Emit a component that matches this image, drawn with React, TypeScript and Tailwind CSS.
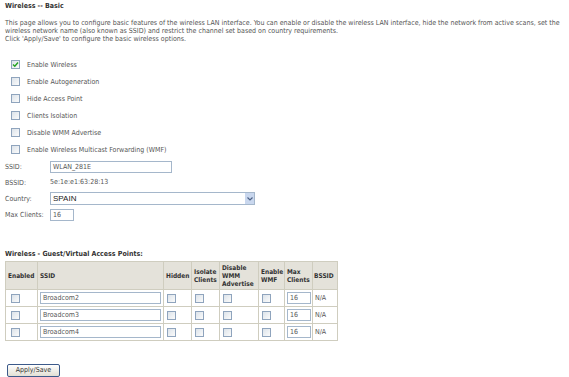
const font = { fontFamily: '"DejaVu Sans Condensed", "DejaVu Sans", sans-serif' };

function Box({ checked = false }: { checked?: boolean }) {
  return (
    <span className="inline-flex h-[9px] w-[9px] items-center justify-center border border-[#8fa4bd] bg-gradient-to-br from-[#dce3ea] to-[#fbfbfb]">
      {checked && (
        <svg width="7" height="7" viewBox="0 0 7 7">
          <path d="M1 3.5 L2.8 5.3 L6 1.5" stroke="#21a121" strokeWidth="1.4" fill="none" />
        </svg>
      )}
    </span>
  );
}

const options = [
  { label: "Enable Wireless", checked: true },
  { label: "Enable Autogeneration" },
  { label: "Hide Access Point" },
  { label: "Clients Isolation" },
  { label: "Disable WMM Advertise" },
  { label: "Enable Wireless Multicast Forwarding (WMF)" },
];

const guests = ["Broadcom2", "Broadcom3", "Broadcom4"];

export default function App() {
  return (
    <div className="min-h-screen bg-white text-[7px] leading-[8px] text-[#555]" style={font}>
      <div className="px-[5px] pt-[2px]">
        <div className="font-bold text-[#333] h-[9px]">Wireless -- Basic</div>
        <p className="mt-[8px] whitespace-nowrap text-[#555]">
          This page allows you to configure basic features of the wireless LAN interface. You can enable or disable the wireless LAN interface, hide the network from active scans, set the
          <br />
          wireless network name (also known as SSID) and restrict the channel set based on country requirements.
          <br />
          Click 'Apply/Save' to configure the basic wireless options.
        </p>

        <div className="mt-[17px] flex flex-col gap-[8px] pl-[6px]">
          {options.map((o) => (
            <div key={o.label} className="flex h-[9px] items-center gap-[7px]">
              <Box checked={o.checked} />
              <span>{o.label}</span>
            </div>
          ))}
        </div>

        <div className="mt-[7px] grid grid-cols-[45px_auto] items-center gap-y-[4px]">
          <span>SSID:</span>
          <span className="flex h-[12px] w-[122px] items-center border border-[#a5b7cb] px-[2px]">WLAN_281E</span>
          <span>BSSID:</span>
          <span className="h-[11px] leading-[11px]">5e:1e:e1:63:28:13</span>
          <span>Country:</span>
          <span className="flex h-[13px] w-[205px] items-center justify-between border border-[#a5b7cb] pl-[2px] text-[8px] text-[#222]" style={{ fontFamily: '"Liberation Sans", sans-serif' }}>
            SPAIN
            <span className="flex h-[11px] w-[9px] items-center justify-center bg-[#c9d7ee]">
              <svg width="6" height="4" viewBox="0 0 6 4">
                <path d="M0.5 0.5 L3 3 L5.5 0.5" stroke="#4d6185" strokeWidth="1.2" fill="none" />
              </svg>
            </span>
          </span>
          <span>Max Clients:</span>
          <span className="flex h-[12px] w-[24px] items-center border border-[#a5b7cb] px-[2px]">16</span>
        </div>

        <div className="mt-[29px] font-bold text-[#333]">Wireless - Guest/Virtual Access Points:</div>

        <table className="mt-[3px] w-[332px] table-fixed border-collapse border border-[#cfcdbf]">
          <colgroup>
            <col className="w-[32px]" />
            <col className="w-[126px]" />
            <col className="w-[28px]" />
            <col className="w-[28px]" />
            <col className="w-[39px]" />
            <col className="w-[26px]" />
            <col className="w-[28px]" />
            <col className="w-[25px]" />
          </colgroup>
          <thead>
            <tr className="h-[28px] bg-[#e4e2da] text-[6.5px] font-bold text-[#333]">
              <th className="border border-[#cfcdbf] px-[2px] text-left whitespace-nowrap">Enabled</th>
              <th className="border border-[#cfcdbf] px-[2px] text-left">SSID</th>
              <th className="border border-[#cfcdbf] px-[2px] text-left">Hidden</th>
              <th className="border border-[#cfcdbf] px-[2px] text-left">Isolate<br />Clients</th>
              <th className="border border-[#cfcdbf] px-[2px] text-left whitespace-nowrap">Disable<br />WMM<br />Advertise</th>
              <th className="border border-[#cfcdbf] px-[2px] text-left">Enable<br />WMF</th>
              <th className="border border-[#cfcdbf] px-[2px] text-left">Max<br />Clients</th>
              <th className="border border-[#cfcdbf] px-[1px] text-left">BSSID</th>
            </tr>
          </thead>
          <tbody>
            {guests.map((g) => (
              <tr key={g} className="h-[17px]">
                <td className="border border-[#cfcdbf] px-[5px]"><div className="flex"><Box /></div></td>
                <td className="border border-[#cfcdbf] px-[2px]">
                  <span className="flex h-[12px] w-[121px] items-center border border-[#a5b7cb] px-[2px]">{g}</span>
                </td>
                <td className="border border-[#cfcdbf] px-[3px]"><div className="flex"><Box /></div></td>
                <td className="border border-[#cfcdbf] px-[3px]"><div className="flex"><Box /></div></td>
                <td className="border border-[#cfcdbf] px-[3px]"><div className="flex"><Box /></div></td>
                <td className="border border-[#cfcdbf] px-[3px]"><div className="flex"><Box /></div></td>
                <td className="border border-[#cfcdbf] px-[2px]">
                  <span className="flex h-[12px] w-[24px] items-center border border-[#a5b7cb] px-[2px]">16</span>
                </td>
                <td className="border border-[#cfcdbf] px-[2px]">N/A</td>
              </tr>
            ))}
          </tbody>
        </table>

        <button className="mt-[23px] ml-[2px] h-[13px] w-[53px] rounded-[2px] border border-[#3c5a8a] bg-gradient-to-b from-white to-[#e3e0d4] text-[7px] leading-[11px] text-[#333]">
          Apply/Save
        </button>
      </div>
    </div>
  );
}
